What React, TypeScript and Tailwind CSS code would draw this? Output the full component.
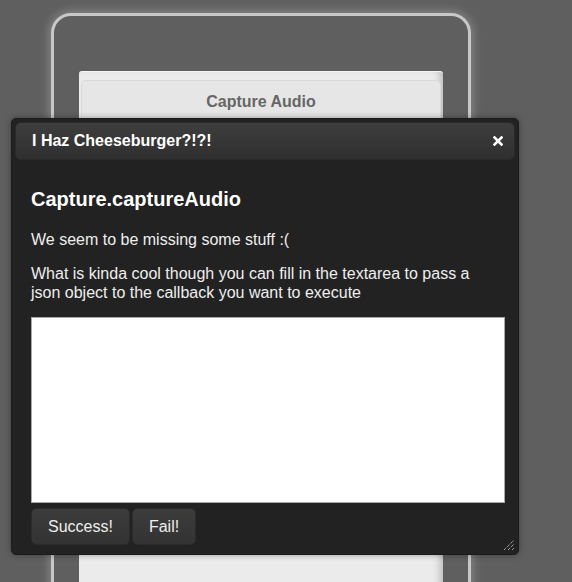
import React from "react";

export default function App() {
  return (
    <div
      className="relative w-[572px] h-[582px] overflow-hidden bg-[#5f5f5f]"
      style={{ fontFamily: '"Liberation Sans", Arial, sans-serif' }}
    >
      {/* phone frame */}
      <div className="ml-[51px] mt-[13px] w-[420px] h-[620px] rounded-[20px] border-[3px] border-[#c8c8c8] shadow-[0_0_10px_2px_rgba(255,255,255,0.25)] pl-[25px] pt-[55px]">
        <div className="w-[364px] h-[560px] bg-[#ebebeb] border-t border-[#f4f4f4] rounded-t-[3px] pt-[8px] px-[2px] shadow-[inset_-8px_0_8px_-6px_rgba(0,0,0,0.25)]">
          <div className="h-[44px] rounded-t-[5px] border border-[#d8d8d8] bg-[#e6e6e6] flex items-center justify-center">
            <span className="text-[16px] font-bold text-[#666]">Capture Audio</span>
          </div>
        </div>
      </div>

      {/* dialog */}
      <div className="absolute left-[11px] top-[118px] w-[508px] h-[437px] bg-[#222] rounded-[5px] border border-[#1b1b1b] p-[3px] shadow-[0_0_6px_rgba(0,0,0,0.35)]">
        <div className="h-[38px] rounded-[6px] border border-[#2a2a2a] bg-gradient-to-b from-[#3e3e3e] to-[#2f2f2f] flex items-center justify-between pl-[16px] pr-[11px]">
          <span className="text-[16px] font-bold text-white">I Haz Cheeseburger?!?!</span>
          <svg width="10" height="10" viewBox="0 0 10 10">
            <path d="M1.5 1.5 L8.5 8.5 M8.5 1.5 L1.5 8.5" stroke="#fff" strokeWidth="2.6" strokeLinecap="square" />
          </svg>
        </div>
        <div className="pl-[16px]">
          <h2 className="mt-[27px] text-[20px] leading-[24px] font-bold text-white">Capture.captureAudio</h2>
          <p className="mt-[20px] text-[16px] leading-[18px] text-[#eee]">We seem to be missing some stuff :(</p>
          <p className="mt-[15px] w-[462px] text-[16px] leading-[19px] text-[#eee]">
            What is kinda cool though you can fill in the textarea to pass a json object to the callback you want to execute
          </p>
          <textarea className="mt-[15px] block w-[474px] h-[186px] bg-white border border-[#a8a8a8] resize-none outline-none" />
          <div className="mt-[5px] flex gap-[2px]">
            <button className="h-[37px] px-[16px] rounded-[5px] border border-[#2b2b2b] bg-gradient-to-b from-[#3c3c3c] to-[#333] text-[16px] text-[#eee]">
              Success!
            </button>
            <button className="h-[37px] px-[16px] rounded-[5px] border border-[#2b2b2b] bg-gradient-to-b from-[#3c3c3c] to-[#333] text-[16px] text-[#eee]">
              Fail!
            </button>
          </div>
        </div>
        <svg className="absolute right-[3px] bottom-[3px]" width="12" height="12" viewBox="0 0 12 12">
          <path d="M1 11 L11 1 M5 11 L11 5 M9 11 L11 9" stroke="#ddd" strokeWidth="1" strokeDasharray="1 1" />
        </svg>
      </div>
    </div>
  );
}
